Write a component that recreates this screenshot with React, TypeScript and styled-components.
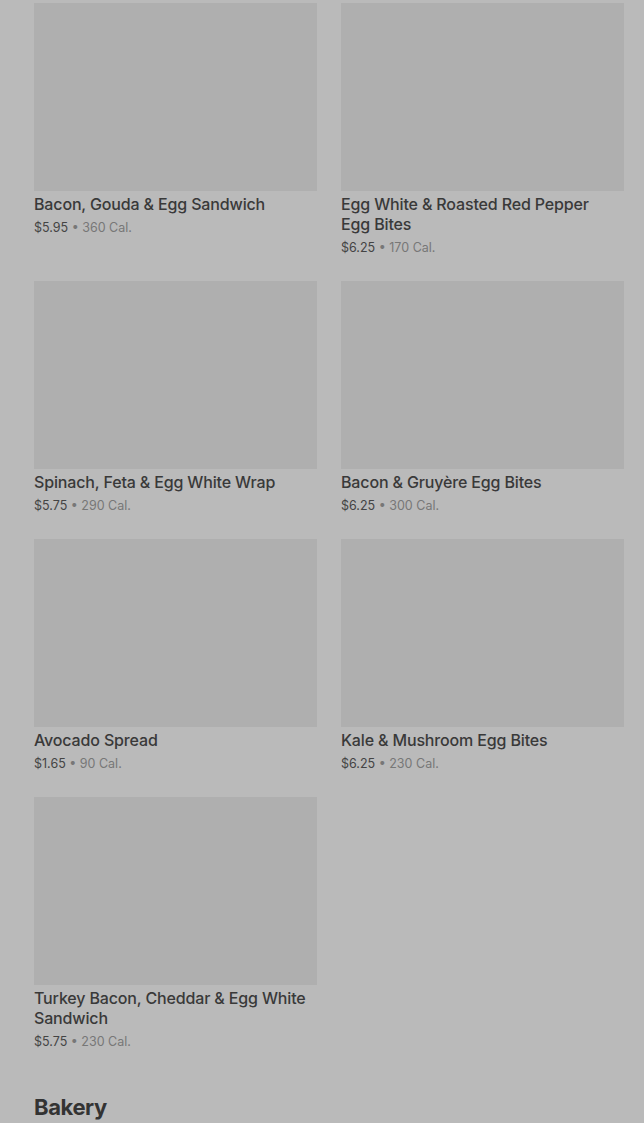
import React from "react";
import styled, { createGlobalStyle } from "styled-components";

interface MenuItem {
  name: string;
  price: string;
  cal: number;
}

const items: MenuItem[] = [
  { name: "Bacon, Gouda & Egg Sandwich", price: "$5.95", cal: 360 },
  { name: "Egg White & Roasted Red Pepper Egg Bites", price: "$6.25", cal: 170 },
  { name: "Spinach, Feta & Egg White Wrap", price: "$5.75", cal: 290 },
  { name: "Bacon & Gruyère Egg Bites", price: "$6.25", cal: 300 },
  { name: "Avocado Spread", price: "$1.65", cal: 90 },
  { name: "Kale & Mushroom Egg Bites", price: "$6.25", cal: 230 },
  { name: "Turkey Bacon, Cheddar & Egg White Sandwich", price: "$5.75", cal: 230 },
];

const GlobalStyle = createGlobalStyle`
  html, body {
    margin: 0;
    padding: 0;
    background: #bababa;
  }
  body {
    font-family: Inter, "Noto Sans", Arial, sans-serif;
    -webkit-font-smoothing: antialiased;
  }
`;

const Page = styled.div`
  padding: 3px 20px 0 34px;
  min-height: 1123px;
  box-sizing: border-box;
`;

const Grid = styled.div`
  display: grid;
  grid-template-columns: 1fr 1fr;
  column-gap: 24px;
  row-gap: 24px;
`;

const Card = styled.div`
  display: flex;
  flex-direction: column;
`;

const Thumb = styled.div`
  height: 188px;
  background: #afafaf;
`;

const Name = styled.div`
  margin-top: 3px;
  padding-right: 5px;
  font-size: 16px;
  line-height: 20px;
  font-weight: 500;
  letter-spacing: -0.15px;
  color: #393939;
`;

const Meta = styled.div`
  margin-top: 5px;
  font-size: 12.5px;
  line-height: 18px;
  color: #777;
`;

const Price = styled.span`
  color: #444;
`;

const Section = styled.h2`
  margin: 42px 0 0;
  font-size: 22px;
  line-height: 28px;
  font-weight: 700;
  letter-spacing: -0.4px;
  color: #333;
`;

const App: React.FC = () => (
  <>
    <GlobalStyle />
    <Page>
      <Grid>
        {items.map((item) => (
          <Card key={item.name}>
            <Thumb />
            <Name>{item.name}</Name>
            <Meta>
              <Price>{item.price}</Price> • {item.cal} Cal.
            </Meta>
          </Card>
        ))}
      </Grid>
      <Section>Bakery</Section>
    </Page>
  </>
);

export default App;
